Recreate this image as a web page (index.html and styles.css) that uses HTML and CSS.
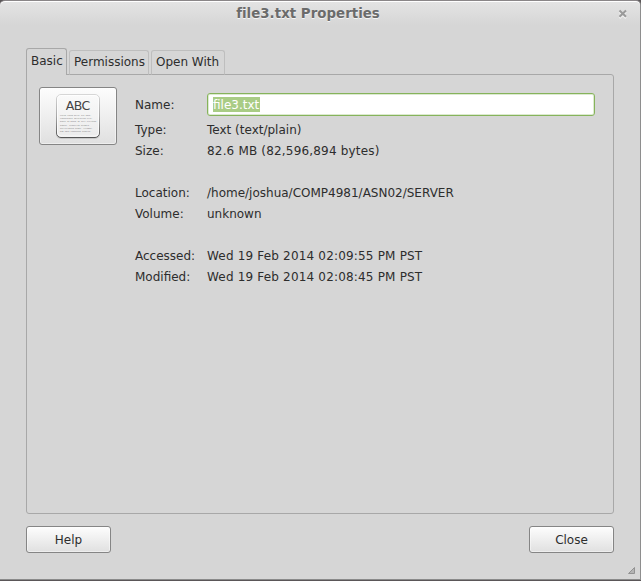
FILE: index.html
```html
<!DOCTYPE html>
<html lang="en">
<head>
<meta charset="utf-8">
<title>file3.txt Properties</title>
<link rel="stylesheet" href="styles.css">
</head>
<body>
<div class="window">
  <header class="titlebar">
    <h1 class="title">file3.txt Properties</h1>
    <svg class="close-icon" width="10" height="10" viewBox="0 0 10 10" aria-label="Close window">
      <path class="close-shadow" d="M1.5 3 L8 9.3 M8 3 L1.5 9.3"/>
      <path class="close-cross" d="M1.5 1.5 L8 7.8 M8 1.5 L1.5 7.8"/>
    </svg>
  </header>
  <nav class="tabs">
    <div class="tab tab-basic active">Basic</div>
    <div class="tab tab-permissions">Permissions</div>
    <div class="tab tab-open">Open With</div>
  </nav>
  <main class="panel">
    <button class="file-button">
      <svg class="file-icon" width="46" height="48" viewBox="0 0 46 48">
        <defs>
          <linearGradient id="paper" x1="0" y1="0" x2="0" y2="1">
            <stop offset="0" stop-color="#fafafa"/><stop offset="1" stop-color="#ebebeb"/>
          </linearGradient>
          <linearGradient id="edge" x1="0" y1="0" x2="0" y2="1">
            <stop offset="0" stop-color="#d6d6d6"/><stop offset=".5" stop-color="#a8a8a8"/><stop offset="1" stop-color="#555"/>
          </linearGradient>
        </defs>
        <rect x="1" y="3" width="44" height="44" rx="5" fill="#000" opacity=".12"/>
        <rect x="1.5" y="2.5" width="43" height="43" rx="4.5" fill="url(#paper)" stroke="url(#edge)"/>
        <rect x="2.5" y="3.5" width="41" height="40.5" rx="3.5" fill="none" stroke="#fff" opacity=".7"/>
        <text class="icon-title" x="10.8" y="18" textLength="24.5">ABC</text>
        <g class="icon-copy" transform="translate(5 24.3) scale(.2)">
          <text y="0">Lorem ipsum dolor sit amet,</text>
          <text y="15.5">consectetur adipiscing elit.</text>
          <text y="31">Donec at metus at orci eleifend</text>
          <text y="46.5">tempor. Phasellus blandit</text>
          <text y="62">sollicitudin justo. Vivamus,</text>
          <text y="77.5">nam eget consequat sodales.</text>
        </g>
      </svg>
    </button>
    <dl class="details">
      <dt class="name-row">Name:</dt><dd class="entry"><span class="selected">file3.txt</span></dd>
      <dt>Type:</dt><dd>Text (text/plain)</dd>
      <dt>Size:</dt><dd class="numeric">82.6 MB (82,596,894 bytes)</dd>
      <dt class="section">Location:</dt><dd class="section">/home/joshua/COMP4981/ASN02/SERVER</dd>
      <dt>Volume:</dt><dd>unknown</dd>
      <dt class="section">Accessed:</dt><dd class="section numeric">Wed 19 Feb 2014 02:09:55 PM PST</dd>
      <dt>Modified:</dt><dd class="numeric">Wed 19 Feb 2014 02:08:45 PM PST</dd>
    </dl>
  </main>
  <footer class="actions">
    <button class="action">Help</button>
    <button class="action">Close</button>
  </footer>
  <svg class="grip" width="7" height="7" viewBox="0 0 7 7"><path d="M6.5 .5 V6.5 H.5 Z"/></svg>
</div>
</body>
</html>
```

FILE: styles.css
```css
* { box-sizing: border-box; }
body {
  margin: 0;
  height: 581px;
  overflow: hidden;
  background: #5a5658;
  font: 12px/21px "DejaVu Sans", sans-serif;
  color: #2d2d2d;
}
.window {
  position: relative;
  display: flex;
  flex-direction: column;
  width: 641px;
  height: 580px;
  padding: 0 26px;
  background: linear-gradient(#e4e4e4, #d6d6d6 24px);
  border-top: 1px solid #8a8688;
  border-right: 1px solid #8e8e8e;
  border-bottom: 1px solid #8a8a8a;
  border-radius: 5px 5px 0 0;
  box-shadow: inset 0 1px #fff;
}
.titlebar {
  display: grid;
  grid-template-columns: 1fr auto 1fr;
  align-items: center;
  height: 24px;
  margin: 0 -14px 0 -26px;
}
.title {
  grid-column: 2;
  margin: 0 0 0 -12px;
  padding-top: 1px;
  font-size: 13.333px;
  line-height: 23px;
  letter-spacing: .04px;
  color: #6b6b6b;
  text-shadow: 0 1px #f4f4f4;
}
.close-icon { justify-self: end; margin-top: 2px; }
.close-cross { fill: none; stroke: #9a9a9a; stroke-width: 2; }
.close-shadow { fill: none; stroke: #f0f0f0; stroke-width: 2; }
.tabs {
  display: flex;
  align-items: flex-end;
  gap: 2px;
  height: 27px;
  margin-top: 23px;
  z-index: 1;
}
.tab {
  height: 25px;
  padding-left: 4px;
  border: 1px solid #bebebe;
  border-bottom-color: #a8a8a8;
  border-radius: 3px 3px 0 0;
  line-height: 22px;
  white-space: nowrap;
}
.tab.active {
  height: 27px;
  border-color: #a8a8a8;
  border-bottom: 0;
  background: #d6d6d6;
  line-height: 24px;
}
.tab-basic { width: 41px; }
.tab-permissions { width: 80px; }
.tab-open { width: 74px; }
.panel {
  display: flex;
  align-items: flex-start;
  gap: 18px;
  width: 588px;
  height: 440px;
  margin-top: -1px;
  padding: 12px 18px 0 12px;
  border: 1px solid #a8a8a8;
  border-radius: 0 3px 3px 3px;
}
button {
  border: 1px solid #858585;
  border-radius: 3px;
  background: linear-gradient(#fdfdfd, #e0e0e0);
  box-shadow: inset 0 0 0 1px rgba(255,255,255,.45);
  font: inherit;
  color: inherit;
}
.file-button {
  display: grid;
  place-items: center;
  flex: none;
  width: 78px;
  height: 58px;
  padding: 0;
}
.file-icon { overflow: visible; }
.icon-title { font: 12.5px "DejaVu Sans", sans-serif; fill: #444; }
.icon-copy { font: 9.7px "Liberation Mono", monospace; fill: #777; }
.details {
  display: grid;
  grid-template-columns: 72px 388px;
  margin: 6px 0 0;
}
.details dt, .details dd { margin: 0; }
.details .name-row { line-height: 24px; }
.entry {
  height: 23px;
  padding: 3px 5px;
  border: 1px solid #86b35b;
  border-radius: 3px;
  background: #fff;
  box-shadow: inset 0 0 0 1px #dcead0;
}
.details .entry { margin-bottom: 4px; }
.selected {
  display: block;
  width: 47px;
  height: 15px;
  line-height: 17px;
  background: #a9cc85;
  color: #fff;
}
.details .section { padding-top: 21px; }
.numeric { letter-spacing: .18px; }
.actions {
  display: flex;
  justify-content: space-between;
  width: 588px;
  margin-top: 12px;
}
.action {
  width: 85px;
  height: 27px;
  padding: 2px 0 0;
}
.grip { position: absolute; right: 5px; bottom: 5px; }
.grip path { fill: #b4b4b4; stroke: #929292; }
```
